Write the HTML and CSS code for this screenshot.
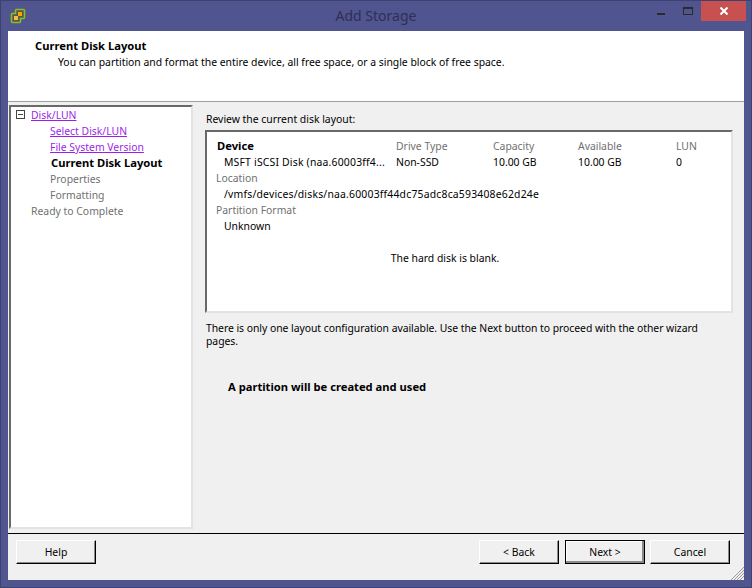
FILE: index.html
```html
<!DOCTYPE html>
<html lang="en">
<head>
<meta charset="utf-8">
<title>Add Storage</title>
<link rel="stylesheet" href="styles.css">
</head>
<body>
<div class="window">
  <div class="titlebar">
    <svg class="app-icon" width="16" height="16" viewBox="0 0 16 16">
      <path d="M5.5 1.5h8a1 1 0 0 1 1 1v7a1 1 0 0 1-1 1h-3v3a1 1 0 0 1-1 1h-7a1 1 0 0 1-1-1v-7a1 1 0 0 1 1-1h3v-3a1 1 0 0 1 1-1z" fill="#56584a" stroke="#8dbb22" stroke-width="1.6"/>
      <rect x="8" y="4" width="4" height="4" fill="#f2a900"/>
      <rect x="4" y="8" width="4" height="4" fill="#f2c040"/>
    </svg>
    <div class="title">Add Storage</div>
    <div class="controls">
      <div class="ctl ctl-min"><span class="min"></span></div>
      <div class="ctl ctl-max"><span class="max"></span></div>
      <div class="close">
        <svg width="8" height="8" viewBox="0 0 8 8"><path d="M0.5 0.5L7.5 7.5M7.5 0.5L0.5 7.5" stroke="#fff" stroke-width="2"/></svg>
      </div>
    </div>
  </div>
  <div class="client">
    <header class="head">
      <div class="head-title">Current Disk Layout</div>
      <div class="head-sub">You can partition and format the entire device, all free space, or a single block of free space.</div>
    </header>
    <main class="body">
      <nav class="tree">
        <div class="row"><span class="expander"></span><a class="link">Disk/LUN</a></div>
        <div class="row sub"><a class="link">Select Disk/LUN</a></div>
        <div class="row sub"><a class="link">File System Version</a></div>
        <div class="row sub current">Current Disk Layout</div>
        <div class="row sub muted">Properties</div>
        <div class="row sub muted">Formatting</div>
        <div class="row top muted">Ready to Complete</div>
      </nav>
      <section class="content">
        <div class="review">Review the current disk layout:</div>
        <div class="disk">
          <div class="cols">
            <div class="c-dev"><b>Device</b></div>
            <div class="muted">Drive Type</div>
            <div class="muted">Capacity</div>
            <div class="muted">Available</div>
            <div class="muted">LUN</div>
            <div class="c-dev indent wide">MSFT iSCSI Disk (naa.60003ff4...</div>
            <div>Non-SSD</div>
            <div>10.00 GB</div>
            <div>10.00 GB</div>
            <div>0</div>
          </div>
          <div class="line label muted">Location</div>
          <div class="line indent wide">/vmfs/devices/disks/naa.60003ff44dc75adc8ca593408e62d24e</div>
          <div class="line label muted">Partition Format</div>
          <div class="line indent">Unknown</div>
          <div class="blank">The hard disk is blank.</div>
        </div>
        <p class="note">There is only one layout configuration available. Use the Next button to proceed with the other wizard pages.</p>
        <p class="result">A partition will be created and used</p>
      </section>
    </main>
    <footer class="foot">
      <button class="btn">Help</button>
      <div class="spacer"></div>
      <button class="btn">&lt; Back</button>
      <button class="btn default">Next &gt;</button>
      <button class="btn">Cancel</button>
      <svg class="grip" width="14" height="14" viewBox="0 0 14 14"><path d="M14 1L1 14M14 4L4 14M14 7L7 14M14 10L10 14" stroke="#9a9a9a" stroke-width="1"/></svg>
    </footer>
  </div>
</div>
</body>
</html>
```
FILE: styles.css
```css
* { box-sizing: border-box; }
html, body { margin: 0; padding: 0; }
body { width: 752px; height: 588px; overflow: hidden; font: 10.4px/16px "Noto Sans", "Liberation Sans", sans-serif; color: #000; }
b, .head-title, .current { font-weight: 700; font-size: 11.2px; }
.window { width: 752px; height: 588px; background: #50558f; border: 1px solid #3e4270; display: flex; flex-direction: column; padding: 0 7px 7px 7px; }
.titlebar { height: 30px; flex: none; display: flex; align-items: flex-start; position: relative; }
.app-icon { margin: 7px 0 0 2px; }
.title { position: absolute; left: 0; right: 0; top: 5px; text-align: center; font-size: 14px; line-height: 20px; color: #2f2f55; }
.controls { margin-left: auto; display: flex; margin-right: -2px; }
.ctl { height: 20px; position: relative; }
.ctl-min { width: 26px; }
.ctl-max { width: 18px; }
.min { display: block; width: 8px; height: 2px; background: #2a2a2a; margin: 12px 0 0 0; }
.max { display: block; width: 10px; height: 8px; border: 1px solid #2a2a2a; border-top-width: 2px; margin-top: 6px; }
.close { width: 45px; height: 20px; background: #c75050; display: flex; align-items: center; justify-content: center; }
.client { flex: 1; min-height: 0; background: #f0f0f0; display: flex; flex-direction: column; }
.head { height: 71px; flex: none; background: #fff; padding: 7px 0 0 27px; border-bottom: 1px solid #a0a0a0; }
.head-sub { padding-left: 23px; }
.body { flex: 1; min-height: 0; display: flex; padding: 3px 0 4px 1px; border-bottom: 1px solid #000; }
.tree { width: 184px; flex: none; background: #fff; border: 2px solid; border-color: #696969 #e3e3e3 #e3e3e3 #696969; padding: 0 0 0 20px; }
.row { height: 16px; white-space: nowrap; position: relative; }
.sub { padding-left: 19px; }
.current { padding-left: 20px; }
.expander { position: absolute; left: -15px; top: 3px; width: 9px; height: 9px; border: 1px solid #444; background: linear-gradient(#444, #444) center / 5px 1px no-repeat #fff; }
.link { color: #9a1fe8; text-decoration: underline; }
.muted { color: #707070; }
.content { flex: 1; min-width: 0; padding: 6px 11px 0 12px; }
.review { height: 19px; padding-left: 1px; }
.disk { height: 183px; background: #fff; border: 2px solid; border-color: #696969 #e3e3e3 #e3e3e3 #696969; padding: 6px 10px 0 10px; }
.cols { display: grid; grid-template-columns: 179px 97px 85px 98px 1fr; grid-auto-rows: 16px; white-space: nowrap; }
.indent { padding-left: 7px; }
.wide { letter-spacing: 0.2px; }
.line { height: 16px; white-space: nowrap; }
.label { margin-left: -1px; }
.blank { text-align: center; margin-top: 16px; padding-right: 48px; }
.note { margin: 9px 0 0 1px; padding-right: 4px; line-height: 13px; letter-spacing: -0.04px; }
.result { margin: 31px 0 0 23px; font-weight: 700; font-size: 11.2px; }
.foot { height: 46px; flex: none; display: flex; align-items: flex-start; padding: 6px 14px 0 8px; gap: 6px; position: relative; }
.spacer { flex: 1; }
.btn { width: 80px; height: 24px; padding: 0; font: inherit; color: #000; background: #f0f0f0; border: 1px solid; border-color: #fff #000 #000 #fff; box-shadow: inset -1px -1px 0 #8a8a8a; border-radius: 0; }
.default { margin-right: -1px; outline: 1px solid #000; outline-offset: -1px; box-shadow: inset -2px -2px 0 #8a8a8a, inset 1px 1px 0 #fff; }
.grip { position: absolute; right: 0; bottom: 0; }
```
